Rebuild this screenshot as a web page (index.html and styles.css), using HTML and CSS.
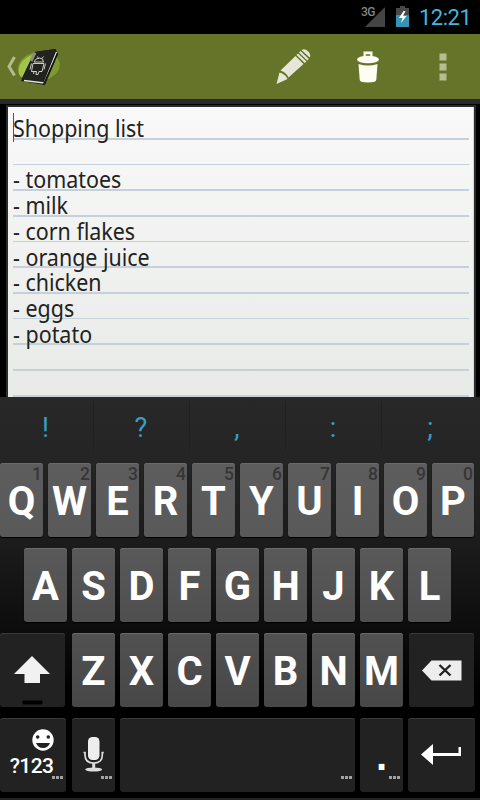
FILE: index.html
```html
<!DOCTYPE html>
<html lang="en">
<head>
  <meta charset="UTF-8">
  <meta name="viewport" content="width=device-width, initial-scale=1.0">
  <title>Shopping list</title>
  <link rel="stylesheet" href="styles.css">
</head>
<body>
  <div class="statusbar">
    <span class="network">3G</span>
    <svg class="signal" width="20" height="20" viewBox="0 0 20 20"><path d="M20 0v20H0z" fill="#444"/></svg>
    <svg class="battery" width="13" height="21" viewBox="0 0 13 21">
      <path d="M4 0h5v2h4v7H0V2h4z" fill="#484848"/>
      <path d="M0 9h13v12H0z" fill="#3594b5"/>
      <path d="M7.500 5L3 12h3.500L5 17l5.500-7H7l2.500-5z" fill="#fff"/>
    </svg>
    <span class="clock">12:21</span>
  </div>

  <header class="actionbar">
    <div class="home">
      <svg width="64" height="65" viewBox="0 0 64 65">
        <path d="M14.500 23L9 32.500l5.500 9" fill="none" stroke="#b4be8c" stroke-width="3"/>
        <ellipse cx="39" cy="32.500" rx="21" ry="14.500" fill="#7d9a31" transform="rotate(-8 39 32.500)"/>
        <path d="M18.500 36Q20 25 33 20.500L24 45Q18 42 18.500 36z" fill="#a3c34a"/>
        <path d="M34.500 18l21-3 2.500 5-13 31-24-4z" fill="#191a17"/>
        <path d="M34.500 18l21-3-13 33-21-3z" fill="#22221f"/>
        <path d="M35 18.500l-4 8.500" stroke="#8b9077" stroke-width="3"/>
        <path d="M56.500 18L44 49l-20-2.500" fill="none" stroke="#e4e6dc" stroke-width="1.300"/>
        <path d="M43.500 50.500l14-31" stroke="#111" stroke-width="1.500"/>
        <g fill="none" stroke="#dedfd6" stroke-width="0.900">
          <path d="M34 28q1.500-4 5.500-4t4 4zM38.500 24.500l-1-2M42 24.500l1.500-2M33 29.500h11l-2 8h-3l-1 3h-2l.5-3h-5zM31.500 29.500l-1.500 6M45.500 29.500l-1.500 6M34 37.500l-.5 2.500"/>
        </g>
      </svg>
    </div>
    <div class="actions">
      <svg class="edit" width="36" height="36" viewBox="0 0 36 36" fill="#e6e7d8">
        <path d="M1.500 35l3-11.500q6 1.500 8 6.500z"/>
        <path d="M5.500 21.500L20.500 7l8 8L13.500 28.500q-2-5-8-7z"/>
        <path d="M21.500 6l1.500-1.500 8.500 8-1.700 1.500zM24 3.500L25.500 2l8.300 8-1.500 1.600zM26.500 1q3-2 6.500 1.200t1.700 6.300z"/>
      </svg>
      <svg class="trash" width="22" height="32" viewBox="0 0 22 32" fill="#fdfdf2">
        <path d="M6.500 6V.5h9V6h-2.300V3.300H8.800V6z"/>
        <ellipse cx="11" cy="8.500" rx="11" ry="3.800"/>
        <path d="M1.500 13q9.500 3 19 0l-1.200 16q-.4 2.500-8.300 2.500T2.700 29z"/>
      </svg>
      <svg class="more" width="8" height="28" viewBox="0 0 8 28" fill="#b5be90"><path d="M.5.500h7v7h-7zM.5 10.500h7v7h-7zM.5 20.500h7v7h-7z"/></svg>
    </div>
  </header>

  <main class="editor">
    <div class="paper">
      <div class="lines">
        <span class="caret"></span>
        <div class="note">Shopping list

- tomatoes
- milk
- corn flakes
- orange juice
- chicken
- eggs
- potato</div>
      </div>
    </div>
  </main>

  <div class="keyboard">
    <div class="suggestions"><span>!</span><span>?</span><span>,</span><span>:</span><span>;</span></div>
    <div class="row">
      <div class="key">Q<small>1</small></div>
      <div class="key">W<small>2</small></div>
      <div class="key">E<small>3</small></div>
      <div class="key">R<small>4</small></div>
      <div class="key">T<small>5</small></div>
      <div class="key">Y<small>6</small></div>
      <div class="key">U<small>7</small></div>
      <div class="key">I<small>8</small></div>
      <div class="key">O<small>9</small></div>
      <div class="key last">P<small>0</small></div>
    </div>
    <div class="row row-home">
      <div class="key">A</div>
      <div class="key">S</div>
      <div class="key">D</div>
      <div class="key">F</div>
      <div class="key">G</div>
      <div class="key">H</div>
      <div class="key">J</div>
      <div class="key">K</div>
      <div class="key">L</div>
    </div>
    <div class="row row-shift">
      <div class="key dark shift">
        <svg width="65" height="74" viewBox="0 0 65 74">
          <path d="M32 23l18 18H40v9H24.500v-9H14z" fill="#f1f1f1"/>
          <rect x="22.500" y="67.500" width="20" height="4" rx="1" fill="#000"/>
        </svg>
      </div>
      <div class="key">Z</div>
      <div class="key">X</div>
      <div class="key">C</div>
      <div class="key">V</div>
      <div class="key">B</div>
      <div class="key">N</div>
      <div class="key">M</div>
      <div class="key dark delete">
        <svg width="65" height="74" viewBox="0 0 65 74">
          <path d="M13 37.500l9.500-10h30v20h-30z" fill="#ededed"/>
          <path d="M30.500 32l11 10.500M41.500 32l-11 10.500" stroke="#222" stroke-width="2.400"/>
        </svg>
      </div>
    </div>
    <div class="row row-bottom">
      <div class="key dark symbols">
        <svg width="22" height="22" viewBox="0 0 22 22">
          <circle cx="11" cy="11" r="10.700" fill="#fff"/>
          <circle cx="5.700" cy="8" r="1.800" fill="#222"/>
          <circle cx="16.300" cy="8" r="1.800" fill="#222"/>
          <path d="M4 14h14q-2 5-7 5t-7-5z" fill="#222"/>
        </svg>
        <span>?123</span>
        <i class="dots"></i>
      </div>
      <div class="key dark mic">
        <svg width="43" height="74" viewBox="0 0 43 74">
          <rect x="16" y="19" width="11.500" height="23" rx="4.500" fill="#eee"/>
          <path d="M11.500 34.500h1.500V37q0 8 8.700 8T30.300 37v-2.500h1.500" fill="none" stroke="#ddd" stroke-width="1.700"/>
          <path d="M21.700 45v6" stroke="#ddd" stroke-width="3"/>
          <ellipse cx="21.700" cy="51.500" rx="8.500" ry="2" fill="#ddd"/>
        </svg>
        <i class="dots"></i>
      </div>
      <div class="key dark space"><i class="dots"></i></div>
      <div class="key dark period"><span>.</span><i class="dots"></i></div>
      <div class="key dark enter">
        <svg width="67" height="74" viewBox="0 0 67 74" fill="#fff">
          <path d="M13 36.500L25 26v9h25.500v-6H53v9H25v9z"/>
        </svg>
      </div>
    </div>
  </div>
</body>
</html>
```
FILE: styles.css
```css
* {
  box-sizing: border-box;
}
body {
  margin: 0;
  width: 480px;
  height: 800px;
  overflow: hidden;
  background: #000;
  font-family: Roboto, sans-serif;
}
svg {
  display: block;
}

/* status bar */
.statusbar {
  height: 34px;
  display: flex;
  justify-content: flex-end;
  align-items: flex-start;
  padding: 6px 10px 0 0;
}
.network {
  color: #858585;
  font-size: 12px;
  font-weight: 500;
  line-height: 13px;
  letter-spacing: -0.5px;
  margin-right: -10px;
}
.signal {
  margin-top: 1px;
}
.battery {
  margin: 0 10px 0 11px;
}
.clock {
  color: #43b6dd;
  font-size: 22px;
  line-height: 24px;
  width: 51px;
  text-align: right;
  white-space: nowrap;
  letter-spacing: -0.5px;
}

/* action bar */
.actionbar {
  height: 65px;
  display: flex;
  justify-content: space-between;
  align-items: center;
  background: #66742a;
}
.actions {
  display: flex;
  align-items: center;
  padding-right: 33px;
}
.edit {
  margin-right: 46px;
}
.trash {
  margin-right: 60px;
}

/* note */
.editor {
  height: 298px;
  padding: 8px 6px 0 8px;
  background: linear-gradient(#2b282a 0 5px, transparent 5px), #000;
}
.paper {
  height: 290px;
  padding: 8px 4px 0 5px;
  background: linear-gradient(#f8f9f8, #e8eae8);
  border: solid #d9dad8;
  border-width: 0 1px 0 0;
  box-shadow: 0 0 0 2px #2b2b29;
}
.lines {
  position: relative;
  height: 282px;
  background: repeating-linear-gradient(transparent 0 22.800px, #c5d0da 22.800px 24.500px, transparent 24.500px 25.700px);
}
.note {
  padding-top: 1px;
  font-family: "Noto Sans", sans-serif;
  font-size: 23px;
  line-height: 25.700px;
  color: #222;
  white-space: pre;
  transform: scaleX(0.932);
  transform-origin: 0 0;
}
.caret {
  position: absolute;
  left: 0;
  top: -2px;
  width: 1px;
  height: 29px;
  background: #555;
}

/* keyboard */
.keyboard {
  position: relative;
  height: 403px;
  background: linear-gradient(#282828 0, #242424 70px, #1b1b1b 150px, #0d0d0d 230px, #000 300px);
  border-bottom: 2px solid #222;
}
.suggestions {
  display: flex;
  height: 66px;
  padding-bottom: 12px;
}
.suggestions span {
  flex: 0 0 96px;
  margin-top: 4px;
  padding-right: 1px;
  border-right: 1px solid #202020;
  color: #369dc7;
  font-size: 27px;
  line-height: 55px;
  text-align: center;
}
.suggestions span:first-child {
  flex-basis: 94px;
  padding-right: 2px;
}
.suggestions span:last-child {
  border-right: 0;
  padding-right: 0;
}
.row {
  display: flex;
  gap: 5px;
  height: 74px;
  margin-bottom: 11px;
}
.key {
  position: relative;
  width: 43px;
  height: 74px;
  padding-top: 19px;
  border-radius: 3px;
  background: linear-gradient(#5d5d5d, #595959);
  box-shadow: inset 0 1px #6a6a6a, 0 1px 1px #000;
  color: #fff;
  font-size: 40px;
  font-weight: 700;
  line-height: 40px;
  text-align: center;
}
.key.last {
  width: 42px;
}
.key small {
  position: absolute;
  top: 3px;
  right: 1px;
  color: #363636;
  font-size: 17.500px;
  font-weight: 500;
  line-height: 17px;
}
.row-home {
  padding-left: 24px;
}
.row-home .key {
  background: linear-gradient(#595959, #4f4f4f);
}
.row-shift .key {
  background: linear-gradient(#515151, #474747);
}
.row .dark {
  padding: 0;
  background: #222;
  box-shadow: inset 0 1px #393939;
}
.shift {
  width: 65px;
  margin-right: 2px;
}
.delete {
  width: 65px;
  margin-left: 1px;
}
.symbols {
  width: 66px;
  margin-right: 1px;
}
.symbols svg {
  margin: 11px 0 0 32px;
}
.symbols span {
  display: block;
  padding-right: 3px;
  font-size: 21px;
  font-weight: 500;
  line-height: 31px;
  letter-spacing: -0.6px;
}
.space {
  width: 235px;
}
.period span {
  display: block;
  font-family: "Liberation Sans", sans-serif;
  line-height: 77px;
}
.enter {
  width: 67px;
}
.dots {
  position: absolute;
  right: 3px;
  bottom: 13px;
  width: 11px;
  height: 3px;
  background: repeating-linear-gradient(90deg, #a2a2a2 0 3px, transparent 3px 4px);
}
```
